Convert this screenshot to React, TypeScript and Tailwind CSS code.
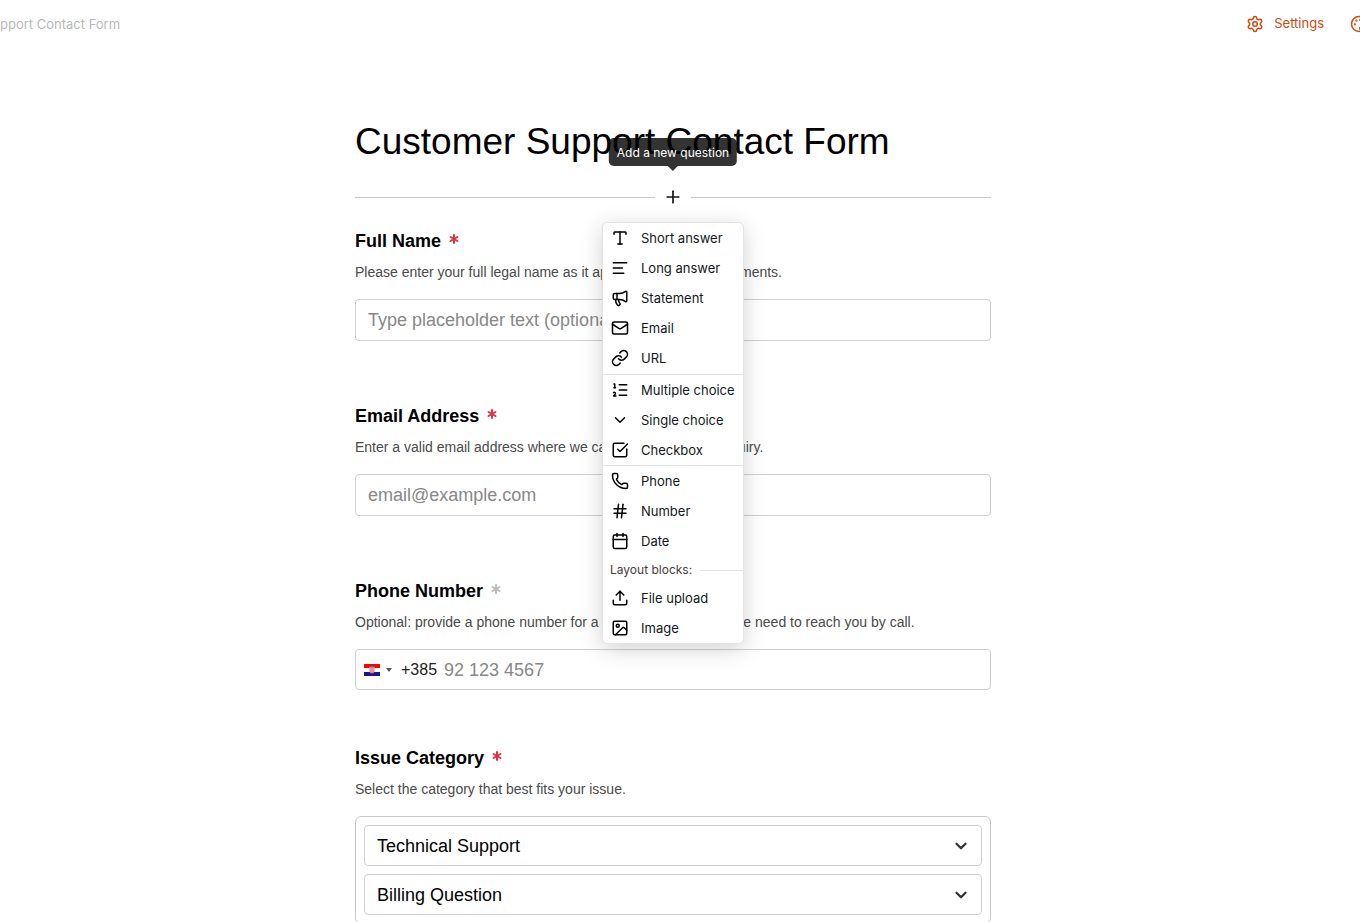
import React from "react";
import {
  AlignLeft,
  Asterisk,
  Calendar,
  ChevronDown,
  Hash,
  Image,
  Link,
  ListOrdered,
  Mail,
  Megaphone,
  Palette,
  Phone,
  Plus,
  Settings,
  SquareCheckBig,
  Type,
  Upload,
} from "lucide-react";

const textBlocks = [
  { label: "Short answer", icon: Type },
  { label: "Long answer", icon: AlignLeft },
  { label: "Statement", icon: Megaphone },
  { label: "Email", icon: Mail },
  { label: "URL", icon: Link },
];

const choiceBlocks = [
  { label: "Multiple choice", icon: ListOrdered },
  { label: "Single choice", icon: ChevronDown },
  { label: "Checkbox", icon: SquareCheckBig },
];

const inputBlocks = [
  { label: "Phone", icon: Phone },
  { label: "Number", icon: Hash },
  { label: "Date", icon: Calendar },
];

const layoutBlocks = [
  { label: "File upload", icon: Upload },
  { label: "Image", icon: Image },
];

const categories = ["Technical Support", "Billing Question"];

type Block = { label: string; icon: React.ElementType };

function MenuGroup({ items, className = "" }: { items: Block[]; className?: string }) {
  return (
    <div role="group" className={className}>
      {items.map(({ label, icon: Icon }) => (
        <button
          key={label}
          type="button"
          role="menuitem"
          className="flex h-[30px] w-full items-center gap-3 px-2 whitespace-nowrap hover:bg-gray-50"
        >
          <Icon className="size-[18px] shrink-0 text-black" strokeWidth={2} />
          <span className="pt-0.5">{label}</span>
        </button>
      ))}
    </div>
  );
}

function AddQuestion() {
  return (
    <div className="relative mt-[19px] flex h-6 items-center">
      <div className="h-px flex-1 bg-[#c8c8c8]" />
      <button
        type="button"
        aria-label="Add a new question"
        className="flex w-9 justify-center text-[#111]"
      >
        <Plus className="size-5" strokeWidth={2} />
      </button>
      <div className="h-px flex-1 bg-[#c8c8c8]" />

      {/* Tooltip */}
      <div
        role="tooltip"
        className="absolute bottom-full left-1/2 z-10 mb-3.5 flex -translate-x-1/2 flex-col items-center font-['Inter',sans-serif]"
      >
        <div className="flex h-7 items-center rounded-[5px] bg-black/80 px-2 pt-0.5 text-xs whitespace-nowrap text-white">
          Add a new question
        </div>
        <div className="border-x-[5px] border-t-[5px] border-x-transparent border-t-black/80" />
      </div>

      {/* Block menu */}
      <div
        role="menu"
        className="absolute top-full left-1/2 z-20 mt-[13px] w-[142px] -translate-x-1/2 rounded-[5px] border border-[#e4e4e4] bg-white font-['Inter',sans-serif] text-[13px] text-[#111820] shadow-[0_5px_22px_rgba(0,0,0,0.18)]"
      >
        <MenuGroup items={textBlocks} className="pb-px" />
        <MenuGroup items={choiceBlocks} className="border-t border-[#e2e5e8]" />
        <MenuGroup items={inputBlocks} className="border-t border-[#e2e5e8] pb-px" />
        <div className="flex h-[26px] items-center gap-2 pl-[7px] text-xs text-[#4a3a3e]">
          Layout blocks:
          <div className="h-px flex-1 bg-[#e2e5e8]" />
        </div>
        <MenuGroup items={layoutBlocks} />
      </div>
    </div>
  );
}

function FieldHeader({
  id,
  label,
  description,
  required = true,
}: {
  id: string;
  label: string;
  description: string;
  required?: boolean;
}) {
  return (
    <>
      <label htmlFor={id} className="flex h-7 items-center gap-[5px] text-lg font-bold text-black">
        {label}
        <span className={required ? "pb-1 text-[#dc3545]" : "pb-1 text-[#bbb]"}>
          <Asterisk className="size-4" strokeWidth={3} />
        </span>
      </label>
      <p className="mt-[7px] text-sm text-[#4a4a4a]">{description}</p>
    </>
  );
}

function CroatiaFlag() {
  return (
    <svg viewBox="0 0 16 12" className="h-3 w-4 shrink-0" aria-hidden="true">
      <rect width="16" height="12" fill="#fff" />
      <rect width="16" height="4" fill="#f00" />
      <rect y="8" width="16" height="4" fill="#171796" />
      <path d="M5.5 3.5h5v3.6a2.5 2.5 0 0 1-5 0z" fill="#e66" />
      <path
        d="M5.5 3.5h1v1h-1zM7.5 3.5h1v1h-1zM9.5 3.5h1v1h-1zM6.5 4.5h1v1h-1zM8.5 4.5h1v1h-1zM5.5 5.5h1v1h-1zM7.5 5.5h1v1h-1zM9.5 5.5h1v1h-1zM6.5 6.5h1v1h-1zM8.5 6.5h1v1h-1zM7.5 7.5h1v1h-1z"
        fill="#f7c4c4"
      />
      <path d="M5 2.5l1.2.6L8 2.3l1.8.8 1.2-.6-.5 1.5h-5z" fill="#8096c8" />
    </svg>
  );
}

export default function App() {
  return (
    <div className="min-h-screen overflow-x-hidden bg-white font-['Liberation_Sans',Arial,sans-serif]">
      <header className="flex h-12 items-center justify-between overflow-hidden font-['Inter',sans-serif] text-[13px]">
        <span className="pt-0.5 whitespace-nowrap text-[#b8b8b8]">pport Contact Form</span>
        <nav className="-mr-2 flex items-center gap-[26px] text-[#cc4a0a]">
          <button type="button" className="flex items-center gap-2.5">
            <Settings className="size-[18px]" strokeWidth={2} />
            Settings
          </button>
          <button type="button" aria-label="Design">
            <Palette className="size-[18px]" strokeWidth={2} />
          </button>
        </nav>
      </header>

      <main className="pt-[70px] pr-3.5">
        <form className="mx-auto max-w-[636px]">
          <h1 className="text-[37px] leading-[48px] text-black">Customer Support Contact Form</h1>

          <AddQuestion />

          <div className="mt-[18px]">
            <FieldHeader
              id="full-name"
              label="Full Name"
              description="Please enter your full legal name as it appears on official documents."
            />
            <input
              id="full-name"
              type="text"
              placeholder="Type placeholder text (optional)"
              className="mt-[17px] h-[42px] w-full rounded-[4px] border border-[#ced0d6] px-3 text-lg placeholder:text-[#888]"
            />
          </div>

          <div className="mt-[61px]">
            <FieldHeader
              id="email"
              label="Email Address"
              description="Enter a valid email address where we can respond to your inquiry."
            />
            <input
              id="email"
              type="email"
              placeholder="email@example.com"
              className="mt-[17px] h-[42px] w-full rounded-[4px] border border-[#ced0d6] px-3 text-lg placeholder:text-[#888]"
            />
          </div>

          <div className="mt-[61px]">
            <FieldHeader
              id="phone"
              label="Phone Number"
              required={false}
              description="Optional: provide a phone number for a callback in the event we need to reach you by call."
            />
            <div className="mt-[17px] flex h-[41px] items-center rounded-[4px] border border-[#ced0d6] pl-2">
              <button
                type="button"
                aria-label="Select country"
                className="flex items-center gap-1.5"
              >
                <CroatiaFlag />
                <span className="border-x-[3px] border-t-4 border-x-transparent border-t-[#555]" />
              </button>
              <span className="ml-[9px] text-base text-[#222]">+385</span>
              <input
                id="phone"
                type="tel"
                placeholder="92 123 4567"
                className="ml-[7px] min-w-0 flex-1 text-lg placeholder:text-[#888]"
              />
            </div>
          </div>

          <div className="mt-[54px]">
            <FieldHeader
              id="category-0"
              label="Issue Category"
              description="Select the category that best fits your issue."
            />
            <div className="mt-[17px] space-y-2 rounded-md border border-[#c8c8c8] p-2">
              {categories.map((category, index) => (
                <div key={category} className="relative">
                  <select
                    id={`category-${index}`}
                    aria-label={category}
                    className="block h-[41px] w-full appearance-none rounded-[4px] border border-[#ced0d6] bg-white px-3 text-lg text-black"
                  >
                    <option>{category}</option>
                  </select>
                  <ChevronDown
                    className="pointer-events-none absolute inset-y-0 right-3 my-auto size-[18px] text-[#333]"
                    strokeWidth={3}
                  />
                </div>
              ))}
            </div>
          </div>
        </form>
      </main>
    </div>
  );
}
